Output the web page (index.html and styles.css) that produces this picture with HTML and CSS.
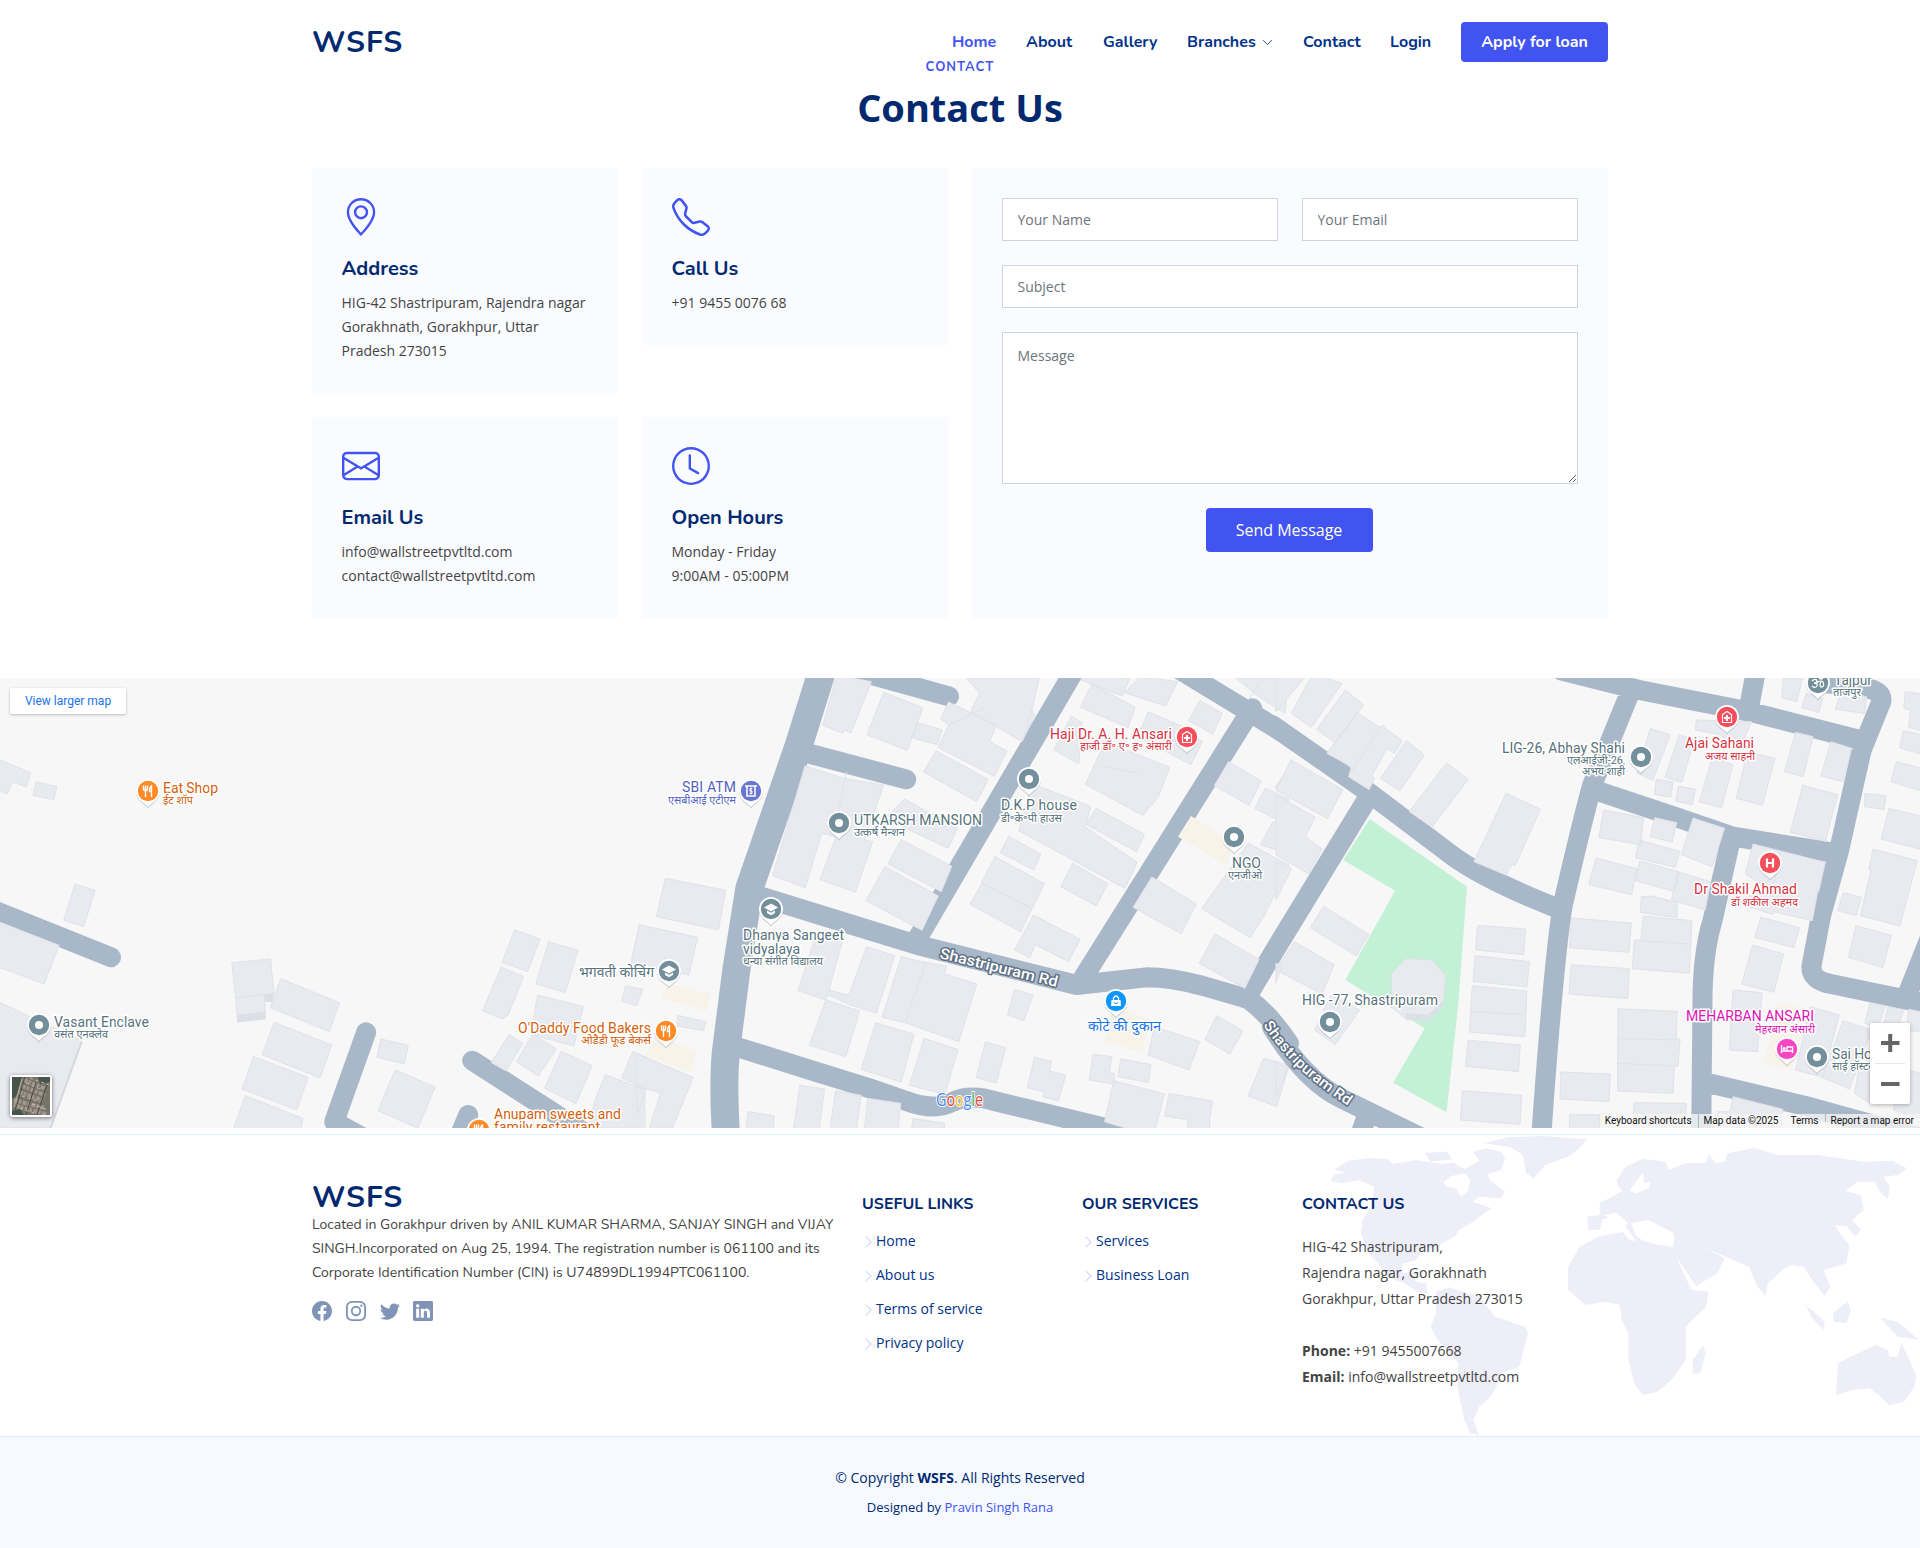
FILE: index.html
```html
<!DOCTYPE html>
<html lang="en">
<head>
<meta charset="utf-8">
<title>WSFS - Contact Us</title>
<link rel="stylesheet" href="styles.css">
</head>
<body>
<header class="header container">
  <a class="logo">WSFS</a>
  <nav class="nav">
    <a class="active">Home</a><a>About</a><a>Gallery</a>
    <a class="drop">Branches <svg width="11" height="11" viewBox="0 0 16 16"><path d="M1.6 4.6 8 11l6.400-6.400" fill="none" stroke="currentColor" stroke-width="1.300"/></svg></a>
    <a>Contact</a><a>Login</a><a class="cta">Apply for loan</a>
  </nav>
</header>
<main>
  <section class="contact container">
    <div class="title"><h2>Contact</h2><p>Contact Us</p></div>
    <div class="grid">
      <div class="card">
        <svg class="ic" viewBox="0 0 16 16"><path d="M12.166 8.940c-.524 1.062-1.234 2.120-1.960 3.070A32 32 0 0 1 8 14.580a32 32 0 0 1-2.206-2.570c-.726-.950-1.436-2.008-1.960-3.070C3.304 7.867 3 6.862 3 6a5 5 0 0 1 10 0c0 .862-.305 1.867-.834 2.940M8 16s6-5.686 6-10A6 6 0 0 0 2 6c0 4.314 6 10 6 10"/><path d="M8 8a2 2 0 1 1 0-4 2 2 0 0 1 0 4m0 1a3 3 0 1 0 0-6 3 3 0 0 0 0 6"/></svg>
        <h3>Address</h3><p>HIG-42 Shastripuram, Rajendra nagar<br>Gorakhnath, Gorakhpur, Uttar<br>Pradesh 273015</p>
      </div>
      <div class="card">
        <svg class="ic" viewBox="0 0 16 16"><path d="M3.654 1.328a.678.678 0 0 0-1.015-.063L1.605 2.300c-.483.484-.661 1.169-.450 1.770a17.600 17.600 0 0 0 4.168 6.608 17.600 17.600 0 0 0 6.608 4.168c.601.211 1.286.033 1.770-.450l1.034-1.034a.678.678 0 0 0-.063-1.015l-2.307-1.794a.680.680 0 0 0-.580-.122l-2.190.547a1.750 1.750 0 0 1-1.657-.459L5.482 8.062a1.750 1.750 0 0 1-.460-1.657l.548-2.190a.680.680 0 0 0-.122-.580zM1.884.511a1.745 1.745 0 0 1 2.612.163L6.290 2.980c.329.423.445.974.315 1.494l-.547 2.190a.680.680 0 0 0 .178.643l2.457 2.457a.680.680 0 0 0 .644.178l2.189-.547a1.750 1.750 0 0 1 1.494.315l2.306 1.794c.829.645.905 1.870.163 2.611l-1.034 1.034c-.740.740-1.846 1.065-2.877.702a18.600 18.600 0 0 1-7.010-4.420 18.600 18.600 0 0 1-4.420-7.009c-.362-1.030-.037-2.137.703-2.877z"/></svg>
        <h3>Call Us</h3><p>+91 9455 0076 68</p>
      </div>
      <div class="card">
        <svg class="ic" viewBox="0 0 16 16"><path d="M0 4a2 2 0 0 1 2-2h12a2 2 0 0 1 2 2v8a2 2 0 0 1-2 2H2a2 2 0 0 1-2-2zm2-1a1 1 0 0 0-1 1v.217l7 4.200 7-4.200V4a1 1 0 0 0-1-1zm13 2.383-4.708 2.825L15 11.105zm-.034 6.876-5.640-3.471L8 9.583l-1.326-.795-5.640 3.470A1 1 0 0 0 2 13h12a1 1 0 0 0 .966-.741M1 11.105l4.708-2.897L1 5.383z"/></svg>
        <h3>Email Us</h3><p>info@wallstreetpvtltd.com<br>contact@wallstreetpvtltd.com</p>
      </div>
      <div class="card">
        <svg class="ic" viewBox="0 0 16 16"><path d="M8 3.500a.5.5 0 0 0-1 0V9a.5.5 0 0 0 .252.434l3.500 2a.5.5 0 0 0 .496-.868L8 8.710z"/><path d="M8 16A8 8 0 1 0 8 0a8 8 0 0 0 0 16m7-8A7 7 0 1 1 1 8a7 7 0 0 1 14 0"/></svg>
        <h3>Open Hours</h3><p>Monday - Friday<br>9:00AM - 05:00PM</p>
      </div>
      <form class="form">
        <input placeholder="Your Name"><input placeholder="Your Email">
        <input class="wide" placeholder="Subject">
        <textarea class="wide" placeholder="Message"></textarea>
        <button class="wide" type="button">Send Message</button>
      </form>
    </div>
  </section>
  <section class="map">
    <svg class="tiles" width="1920" height="450" viewBox="0 0 1920 450">
      <defs>
        <g id="pin"><path d="M0 16.500C-3 12-12 9-12 0A12 12 0 0 1 12 0C12 9 3 12 0 16.500Z" fill="#8d99a3" opacity=".45" transform="translate(0 1)"/><path d="M0 16C-3 12-12 9-12 0A12 12 0 0 1 12 0C12 9 3 12 0 16Z" fill="#fff"/><circle r="10.200"/></g>
        <g id="dot"><use href="#pin" fill="#738f9b"/><circle r="4" fill="#fff"/></g>
        <g id="food"><use href="#pin" fill="#ff8a26"/><path d="M-4.500-5.500v3.500q0 1.500 2 1.500t2-1.500v-3.500M-2.500-5.500V6M3.500 6V-5Q1.500-4 1.500 0.500H3.500" fill="none" stroke="#fff" stroke-width="1.400"/></g>
        <g id="school"><use href="#pin" fill="#738f9b"/><path d="M-7-1.500 0-5.500 7-1.500 0 2.500ZM-4 1.500 0 3.800 4 1.500V4L0 6.300-4 4Z" fill="#fff"/></g>
        <g id="clinic"><use href="#pin" fill="#f74e5c"/><path d="M-4.500 5.500V-2.500L0-5.500 4.500-2.500V5.500Z" fill="none" stroke="#fff" stroke-width="1.200"/><path d="M0-2V4M-3 1H3" stroke="#fff" stroke-width="2"/></g>
      </defs>
      <g class="west" transform="translate(0 -8) scale(.40816 .33333)">
        <g class="road"><path d="M-60 699 272 862M897 1087 819 1355 900 1410M1157 1172 1460 1410M1147 1335 1115 1430"/></g>
        <g class="bld">
          <path d="M-10 265 76 309 64 351 30 336 18 372-10 360ZM88 336 139 349 132 389 81 376ZM184 643 233 661 205 770 156 750ZM-10 752 145 826 108 942-10 888ZM568 878 663 867 671 970 577 983ZM577 983 648 974 650 1046 582 1056ZM688 926 832 998 807 1085 662 1013ZM672 1057 813 1125 784 1224 642 1154ZM621 1160 755 1222 727 1320 593 1257ZM601 1277 742 1345 735 1400 565 1400ZM933 1107 1000 1126 991 1182 924 1162ZM968 1200 1066 1251 1024 1375 926 1322ZM1261 779 1323 808 1293 905 1230 877ZM1344 815 1416 841 1385 968 1313 941ZM1228 891 1283 920 1245 1035 1230 1047 1182 1022ZM1317 975 1429 1010 1406 1128 1301 1093ZM1247 1093 1281 1120 1240 1203 1204 1178ZM1305 1093 1363 1136 1319 1218 1265 1175ZM1375 1144 1451 1187 1411 1301 1334 1255ZM1483 1214 1580 1260 1580 1374 1445 1374 1455 1300ZM1550 1145 1590 1165 1570 1250 1523 1225ZM1533 948 1575 958 1560 1007 1523 993Z"/>
          <path d="M-10 992 200 1112 125 1374-10 1374Z"/>
        </g>
        <path d="M200 1115 122 1380" stroke="#d5d8de" stroke-width="5"/>
        <path d="M648 974 671 970 668 996 650 996ZM582 1034 650 1024V1048L582 1057Z" fill="#dcdfe6"/>
      </g>
      <g class="centre" transform="translate(640 -8) scale(.40816 .33333)">
        <g class="road">
          <path class="main" d="M452-20 388 230Q340 400 268 655L236 900 210 1150Q203 1250 211 1400"/>
          <path d="M520-1 757 79M390 243 652 328M1065 0 680 805M1500 115 1085 925M1310-10 1568 182M1780 390 1568 815 1485 985M230 1128 430 1205 560 1254 650 1292Q720 1325 765 1296 810 1270 870 1294L1180 1385"/>
          <path d="M285 676 500 757 680 825 1070 945 1240 922Q1300 922 1380 948L1490 987Q1540 1030 1590 1120"/>
        </g>
        <g class="bld">
          <path d="M482 15 567 35 517 188 500 180 496 190 448 166ZM597 67 693 113 655 241 556 194ZM680 158 740 180 728 224 668 204ZM756 96 872 165 857 215 899 243 868 319 730 232 757 165 736 146ZM800 24 978 24 960 120 968 135 936 215 810 125 832 70ZM725 242 853 328 825 395 695 306ZM404 288 500 325 597 345 550 510 570 515 528 666 441 629 480 500 445 490 405 653 325 617ZM648 387 778 475 755 535 600 445ZM640 509 764 589 738 665 607 581ZM600 590 731 678 691 781 554 692ZM960 340 1105 410 1090 470 1218 577 1188 655 928 482ZM1117 415 1236 493 1216 545 1093 463ZM903 499 982 552 965 600 883 548ZM870 560 991 641 962 714 836 640ZM838 640 960 716 932 785 808 703ZM964 735 1078 808 1050 875 968 824 955 863 918 840ZM1060 580 1146 641 1118 708 1031 650ZM1108 42 1213 112 1196 173 1079 112ZM1090 15 1200 25 1182 78 1080 30ZM1225 20 1317 35 1288 108 1187 68ZM1057 138 1083 158 1075 282 1014 240ZM1245 125 1330 170 1378 215 1350 284 1220 200ZM1372 92 1427 130 1403 192 1344 152ZM1140 215 1298 292 1270 380 1232 436 1091 343ZM1442 275 1522 333 1492 406 1407 347ZM1580 310 1590 370 1556 352ZM1532 355 1590 387 1570 455 1506 415ZM1550 455 1580 470 1575 545 1520 525ZM1490 520 1590 585 1530 735 1495 803 1376 716ZM1254 621 1363 702 1326 791 1208 712ZM1409 792 1517 868 1482 955 1370 880ZM1460 24 1590 24 1580 130 1510 75ZM62 625 210 661 192 779 40 740ZM-2 764 141 802 120 915-22 878ZM93 1036 161 1055 156 1082 90 1068ZM-10 1150 130 1222 80 1374 23 1374 50 1270-10 1245ZM-10 1250 15 1258-5 1330ZM430 800 496 812 463 960 512 976 555 830 624 858 579 1030 511 1003 462 975 455 990 387 962ZM640 860 694 876 752 888 746 912 825 942 781 1115 708 1084 650 1058 593 1042ZM455 990 538 1023 504 1160 415 1126ZM577 1058 671 1093 640 1236 542 1198ZM696 1105 779 1139 747 1272 660 1246ZM846 1116 896 1133 873 1239 824 1223ZM918 958 963 976 940 1052 900 1035ZM967 1162 1008 1175 1004 1203 1043 1216 1025 1293 986 1280 991 1266 949 1253ZM1110 1153 1156 1160 1150 1205 1163 1212 1161 1242 1101 1230ZM1178 1166 1252 1184 1246 1237 1171 1220ZM1260 1070 1371 1115 1345 1200 1245 1155ZM1413 1037 1477 1082 1445 1152 1384 1108ZM1528 1165 1590 1185 1560 1310 1490 1278ZM1161 1232 1285 1272 1258 1400 1138 1355ZM1296 1270 1403 1293 1396 1345 1395 1400 1340 1400 1342 1350 1286 1338ZM264 1325 329 1337 325 1400 258 1400ZM392 1246 452 1257 437 1400 373 1400ZM479 1262 542 1276 528 1400 463 1400ZM558 1285 639 1300 630 1400 548 1400ZM668 1345 747 1360 744 1400 664 1400Z"/>
          <path class="seam" d="M478 480 506 305M700 880 650 1055M757 165 840 115M1140 290 1218 310M1520 35 1490 90M960 120 936 215"/>
        </g>
        <path class="shop" d="M1350 438 1450 515 1440 588 1318 500ZM68 940 174 972 162 1023 52 985ZM40 1100 141 1145 125 1206 12 1155ZM1160 1010 1248 1050 1230 1147 1138 1115Z"/>
      </g>
      <g class="east" transform="translate(1280 -8) scale(.40816 .33333)">
        <path class="park" d="M220 447 458 650 437 1000 408 1327 277 1238 355 1075 160 930 282 662 155 570Z"/>
        <g class="road">
          <path d="M-20 165 215 365 420 555Q500 628 680 715M855 75 765 345Q735 480 692 710 670 880 640 1400M690 2 880 60 1150 125 1430 213M1340 40 1430 52Q1478 62 1473 95L1425 240 1370 540 1325 740 1302 890Q1300 930 1350 942L1590 1003M1168-10 1148 120M770 360 960 437 1110 500 1355 548M1105 505Q1080 640 1060 750 1035 850 1035 1000L1032 1400M1035 1235 1300 1312 1560 1400M1600 780 1535 980M-20 1070Q60 1230 150 1285L350 1405M215 1330 195 1400"/>
        </g>
        <g class="bld">
          <path d="M-10 15 60 24-10 125ZM80 10 152 40 77 172 28 130ZM160 60 205 105 135 218 90 178ZM190 128 245 172 250 167 300 212 280 250 262 235 225 318 232 325 218 359 168 320 175 290 115 250ZM310 212 354 255 294 362 246 325ZM408 278 461 328 372 472 317 425ZM554 370 638 418 576 588 570 583 553 615 475 575ZM27 270 154 359 116 446-10 360ZM-10 375 86 441 62 500 103 537 70 611-10 555ZM-10 575 28 596-10 690ZM107 709 218 794 187 857 74 773ZM35 815 133 884 103 972-10 900ZM-10 880 5 885-10 940ZM125 975 195 1020 135 1124 85 1080ZM-10 1180 20 1195-10 1280ZM308 866 372 870 406 917 400 1000 363 1052 308 1047 273 1010 273 912ZM484 766 602 777 597 854 479 840ZM478 857 611 875 605 951 473 934ZM471 947 605 963 600 1100 464 1086ZM461 1111 589 1125 584 1205 454 1189ZM447 1262 592 1276 588 1363 442 1350ZM793 420 891 443 883 524 781 503ZM918 443 972 458 961 516 907 500ZM880 510 979 544 969 592 871 563ZM774 564 874 596 862 674 757 644ZM882 573 978 606 966 664 870 632ZM1012 444 1089 475 1059 591 983 553ZM975 606 1055 635 1042 720 959 690ZM885 680 912 678 973 698 973 743 883 727ZM714 744 861 759 855 847 709 833ZM890 738 1009 752 1003 910 863 896 868 811 884 810ZM713 884 856 896 852 986 708 972ZM828 1016 973 1024 971 1104 980 1110 975 1188 966 1190 963 1270 827 1263ZM688 1206 809 1212 806 1295 686 1287ZM710 1334 783 1334 783 1400 708 1400ZM867 1298 996 1300 990 1380 866 1380ZM907 175 956 195 913 330 875 310ZM978 195 1015 208 985 337 943 322ZM1020 150 1155 155 1130 225 1100 220 1080 195 1018 180ZM922 328 963 336 957 382 917 373ZM976 349 1017 357 1011 404 970 394ZM1060 260 1110 285 1082 413 1027 395ZM1145 245 1213 265 1182 406 1118 385ZM1263 187 1306 200 1282 320 1236 305ZM1350 215 1400 235 1380 335 1325 318ZM1281 346 1366 374 1336 514 1250 487ZM1234 24 1280 24 1267 95 1229 83ZM1290 70 1330 85 1320 128 1278 112ZM1375 65 1437 80 1432 130 1360 118ZM1532 65 1590 75 1590 190 1540 172 1545 120 1528 115ZM1527 182 1590 200 1590 260 1518 233ZM1510 275 1590 300 1590 370 1497 335ZM1433 370 1485 377 1480 418 1432 410ZM1492 415 1590 445 1590 545 1473 507ZM1453 537 1561 572 1519 768 1422 737 1448 600 1443 598ZM1380 668 1425 682 1411 737 1366 722ZM1411 767 1498 796 1477 893 1393 862ZM1159 522 1336 577 1320 665 1318 662 1304 752 1210 725 1208 733 1120 700 1190 650 1140 612ZM1178 741 1273 773 1259 833 1163 802ZM1158 825 1234 852 1210 967 1131 942ZM1110 960 1181 968 1170 1145 1101 1140ZM1300 1010 1370 1035 1330 1222 1263 1200ZM1380 1052 1450 1080 1395 1257 1328 1222ZM1445 1000 1482 1010 1465 1072 1433 1060ZM1490 1010 1528 1020 1515 1070 1480 1060ZM1540 1018 1590 1030 1590 1090 1535 1080ZM1420 1180 1445 1190 1445 1300 1408 1270ZM1535 1200 1590 1215 1590 1350 1502 1320ZM1110 1280 1232 1318 1225 1400 1070 1400 1073 1325 1103 1325Z"/>
          <path class="seam" d="M467 1025 602 1033M827 1105 972 1110M827 1180 966 1188M868 811 1003 822M1225 548 1210 640M1225 640 1210 725M190 128 115 250M245 172 168 320"/>
        </g>
        <path d="M308 1030 363 1034 400 990 400 1010 363 1054 308 1048Z" fill="#dcdfe6"/>
        <path class="shop" d="M1220 1000 1270 1012 1262 1060 1280 1100 1250 1198 1184 1178 1205 1080Z"/>
      </g>

      <g>
        <use href="#food" x="148" y="113"/><use href="#food" x="666" y="353"/><use href="#food" x="479" y="452"/>
        <use href="#dot" x="39" y="347"/><use href="#dot" x="839" y="145"/><use href="#dot" x="1029" y="101"/><use href="#dot" x="1234" y="159"/><use href="#dot" x="1641" y="79"/><use href="#dot" x="1817" y="379"/><use href="#dot" x="1330" y="344"/>
        <use href="#school" x="669" y="293"/><use href="#school" x="771" y="231"/>
        <use href="#clinic" x="1187" y="59"/><use href="#clinic" x="1727" y="39"/>
        <g transform="translate(751 113)"><use href="#pin" fill="#6877d3"/><path d="M-6-5H6M-4-5V5H4V-5" fill="none" stroke="#fff" stroke-width="1.500"/><path d="M1.500-2.500H-1V0H1V2.500H-1.500M0-3.500V3.500" fill="none" stroke="#fff"/></g>
        <g transform="translate(1116 323)"><use href="#pin" fill="#0f96fb"/><path d="M-4.500-1H4.500L5 5H-5Z" fill="#fff"/><path d="M-2.500-1V-3Q0-7 2.500-3V-1" fill="none" stroke="#fff" stroke-width="1.300"/><path d="M-2 1.500Q0 4 2 1.500" fill="none" stroke="#0f96fb"/></g>
        <g transform="translate(1818 5)"><use href="#pin" fill="#738f9b"/><path d="M-6-2Q-3-5-1-2.500-1 0-4 0 0 0-1 3-3 6-6 3M-2 0Q3-3 5-1 7 4 3 4 1 2 3-1M1-5Q3-3 5-5" fill="none" stroke="#fff" stroke-width="1.300"/></g>
        <g transform="translate(1770 185)"><use href="#pin" fill="#f74e5c"/><path d="M-3-4.500V4.500M3-4.500V4.500M-3 0H3" stroke="#fff" stroke-width="2.200"/></g>
        <g transform="translate(1787 371)"><use href="#pin" fill="#f746c3"/><path d="M-5.500-4V4M5.500 4V-2H0V2M-5.500 2H5.500" fill="none" stroke="#fff" stroke-width="1.400"/><circle cx="-2.800" cy="-.5" r="1.500" fill="#fff"/></g>
      </g>

      <g class="lbl">
        <g fill="#d5600b">
          <text x="163" y="115" textLength="55">Eat Shop</text><text class="hi" x="163" y="126" textLength="30" lengthAdjust="spacingAndGlyphs">ईट शॉप</text>
          <text x="518" y="355" textLength="133">O'Daddy Food Bakers</text><text class="hi" x="581" y="366" textLength="70" lengthAdjust="spacingAndGlyphs">ओडैडी फूड बेकर्स</text>
          <text x="494" y="441" textLength="127">Anupam sweets and</text><text x="494" y="454" textLength="106">family restaurant</text>
        </g>
        <g fill="#56727c">
          <text x="54" y="349" textLength="95">Vasant Enclave</text><text class="hi" x="54" y="360" textLength="54" lengthAdjust="spacingAndGlyphs">वसंत एनक्लेव</text>
          <text x="579" y="299" textLength="75" lengthAdjust="spacingAndGlyphs">भगवती कोचिंग</text>
          <text x="854" y="147" textLength="128">UTKARSH MANSION</text><text class="hi" x="854" y="158" textLength="51" lengthAdjust="spacingAndGlyphs">उत्कर्ष मैन्शन</text>
          <text x="1001" y="132" textLength="76">D.K.P house</text><text class="hi" x="1001" y="144" textLength="61" lengthAdjust="spacingAndGlyphs">डी॰के॰पी हाउस</text>
          <text x="1232" y="190" textLength="29">NGO</text><text class="hi" x="1228" y="201" textLength="34" lengthAdjust="spacingAndGlyphs">एनजीओ</text>
          <text x="743" y="262" textLength="101">Dhanya Sangeet</text><text x="743" y="276" textLength="57">vidyalaya</text><text class="hi" x="743" y="287" textLength="80" lengthAdjust="spacingAndGlyphs">धन्या संगीत विद्यालय</text>
          <text x="1502" y="75" textLength="123">LIG-26, Abhay Shahi</text><text class="hi" x="1567" y="86" textLength="58" lengthAdjust="spacingAndGlyphs">एलआईजी-26,</text><text class="hi" x="1582" y="97" textLength="43" lengthAdjust="spacingAndGlyphs">अभय शाही</text>
          <text x="1834" y="7" textLength="38">Tajpur</text><text class="hi" x="1833" y="18" textLength="28" lengthAdjust="spacingAndGlyphs">ताजपुर</text>
          <text x="1302" y="327" textLength="136">HIG -77, Shastripuram</text>
          <text x="1832" y="381" textLength="62">Sai Hostel</text><text class="hi" x="1832" y="392" textLength="44" lengthAdjust="spacingAndGlyphs">साई हॉस्टल</text>
        </g>
        <g fill="#5162c4"><text x="682" y="114" textLength="54">SBI ATM</text><text class="hi" x="668" y="126" textLength="68" lengthAdjust="spacingAndGlyphs">एसबीआई एटीएम</text></g>
        <g fill="#d93040">
          <text x="1050" y="61" textLength="122">Haji Dr. A. H. Ansari</text><text class="hi" x="1080" y="72" textLength="92" lengthAdjust="spacingAndGlyphs">हाजी डॉ॰ ए॰ ह॰ अंसारी</text>
          <text x="1685" y="70" textLength="69">Ajai Sahani</text><text class="hi" x="1705" y="82" textLength="50" lengthAdjust="spacingAndGlyphs">अजय साहनी</text>
          <text x="1694" y="216" textLength="103">Dr Shakil Ahmad</text><text class="hi" x="1731" y="228" textLength="67" lengthAdjust="spacingAndGlyphs">डॉ शकील अहमद</text>
        </g>
        <g fill="#e012b4"><text x="1686" y="343" textLength="128">MEHARBAN ANSARI</text><text class="hi" x="1755" y="355" textLength="60" lengthAdjust="spacingAndGlyphs">मेहरबान अंसारी</text></g>
        <text fill="#1a73e8" x="1088" y="353" textLength="73" lengthAdjust="spacingAndGlyphs">कोटे की दुकान</text>
      </g>
      <g class="street">
        <text transform="translate(939 280) rotate(13.800)" textLength="121" lengthAdjust="spacingAndGlyphs">Shastripuram Rd</text>
        <path id="bend" d="M1263 347Q1285 380 1310 400T1362 437" fill="none"/>
        <text><textPath href="#bend" textLength="118" lengthAdjust="spacingAndGlyphs">Shastripuram Rd</textPath></text>
      </g>
      <text class="glogo" x="936" y="428" textLength="47" lengthAdjust="spacingAndGlyphs"><tspan fill="#4285f4">G</tspan><tspan fill="#ea4335">o</tspan><tspan fill="#fbbc04">o</tspan><tspan fill="#4285f4">g</tspan><tspan fill="#34a853">l</tspan><tspan fill="#ea4335">e</tspan></text>
    </svg>
    <a class="larger">View larger map</a>
    <div class="thumb"><svg width="38" height="38" viewBox="0 0 38 38"><path fill="#77756a" d="M0 0h38v38H0z"/><path fill="#46544c" d="M0 0h10L6 18 0 22zM26 0h12v5L28 7zM0 34l8-2 4 6H0z"/><path d="M12 3 34 12M10 9 33 18M7 15 30 23M2 23 32 31M4 29 34 37" stroke="#a3968a" stroke-width="4" stroke-dasharray="4 1 2.500 1.500"/><path d="M13 0 3 34M24 5 14 38M35 8 25 38" stroke="#4b4d45" stroke-width="1"/><path d="M14 6 30 13M10 19 28 25M8 31 24 37M18 1 37 8M20 27 36 33" stroke="#c9bdb0" stroke-dasharray="3 3"/><path d="M10 2 2 30" stroke="#b3a899" stroke-width="1.200"/></svg></div>
    <div class="zoom"><svg width="40" height="81" viewBox="0 0 40 81"><path d="M11 20H29.500M20.200 11V29M11 61H29.500" stroke="#666" stroke-width="4"/><path d="M5 40.500H35" stroke="#e6e6e6"/></svg></div>
    <div class="attr"><span>Keyboard shortcuts</span><span>Map data ©2025</span><span>Terms</span><span>Report a map error</span></div>
  </section>
</main>
<footer class="footer">
  <div class="top">
    <svg class="world" viewBox="0 45 1568 903" preserveAspectRatio="none"><path d="M541 182 547 165 566 158 548 148 572 122 610 114 641 118 650 132 690 120 735 132 755 128 775 148 800 122 790 95 812 85 838 95 845 115 838 150 815 163 820 182 845 215 838 235 800 230 788 245 822 265 800 290 790 305 765 330 757 350 733 372 728 390 705 380 690 420 665 432 668 460 690 455 688 485 708 490 710 520 695 518 670 490 640 470 612 400 622 430 608 400 594 340 597 300 614 255 617 200 590 180 560 190ZM808 70 850 52 910 48 988 58 975 85 955 110 915 135 895 175 882 160 876 105 855 82ZM705 98 745 95 752 118 715 125ZM725 515 748 502 800 530 828 590 880 620 885 640 870 740 838 760 830 800 820 830 800 860 790 900 800 946 785 940 774 900 762 800 764 730 728 660 715 620 725 580ZM1040 180 1055 140 1085 116 1125 125 1130 150 1160 130 1195 128 1200 103 1212 130 1228 125 1232 100 1280 83 1320 105 1390 105 1470 125 1520 122 1545 145 1530 165 1505 170 1515 200 1512 238 1498 215 1490 185 1460 185 1437 212 1465 225 1470 270 1450 300 1465 330 1455 350 1442 320 1420 315 1428 340 1445 375 1440 430 1400 450 1412 500 1402 528 1380 480 1365 440 1345 435 1328 450 1303 490 1299 528 1285 500 1270 440 1235 415 1190 380 1228 415 1215 460 1178 498 1155 440 1135 388 1140 370 1075 370 1060 330 1035 285 1015 300 1010 330 990 330 988 290 1010 285 1010 250 1050 212 1040 195ZM1008 350 1050 335 1062 360 1135 380 1170 510 1200 515 1195 560 1160 620 1160 720 1135 780 1110 815 1085 826 1070 790 1060 720 1060 640 1048 600 1045 555 1020 545 985 555 955 510 955 440 975 380ZM1190 677 1195 700 1185 760 1172 760 1172 720ZM1368 553 1402 605 1400 630 1380 595ZM1416 580 1442 545 1448 570 1440 610 1418 605ZM1498 593 1530 605 1566 660 1530 650ZM1425 730 1460 700 1490 675 1512 690 1515 710 1530 710 1535 668 1550 720 1562 770 1558 800 1540 845 1515 856 1500 830 1480 805 1450 810 1422 826Z"/><path fill="#fff" d="M738 185 752 168 775 160 785 180 780 215 768 230 760 205 742 200ZM1075 180 1085 160 1088 190 1100 185 1095 205 1075 220 1062 212ZM1065 310 1095 300 1138 338 1140 368 1115 375 1085 362 1072 345ZM1018 285 1040 278 1060 310 1050 328Z"/></svg>
    <div class="cols container">
      <div class="about"><a class="logo">WSFS</a>
        <p>Located in Gorakhpur driven by ANIL KUMAR SHARMA, SANJAY SINGH and VIJAY<br>SINGH.Incorporated on Aug 25, 1994. The registration number is 061100 and its<br>Corporate Identification Number (CIN) is U74899DL1994PTC061100.</p>
        <div class="social">
          <svg viewBox="0 0 16 16"><path d="M16 8.049c0-4.446-3.582-8.050-8-8.050C3.580 0-.002 3.603-.002 8.050c0 4.017 2.926 7.347 6.750 7.951v-5.625h-2.030V8.050H6.750V6.275c0-2.017 1.195-3.131 3.022-3.131.876 0 1.791.157 1.791.157v1.980h-1.009c-.993 0-1.303.621-1.303 1.258v1.510h2.218l-.354 2.326H9.250V16c3.824-.604 6.750-3.934 6.750-7.951"/></svg>
          <svg viewBox="0 0 16 16"><path fill-rule="evenodd" d="M4.700 0h6.600A4.700 4.700 0 0 1 16 4.700v6.600A4.700 4.700 0 0 1 11.300 16H4.700A4.700 4.700 0 0 1 0 11.300V4.700A4.700 4.700 0 0 1 4.700 0M4.800 1.450A3.350 3.350 0 0 0 1.450 4.800v6.400a3.350 3.350 0 0 0 3.350 3.350h6.400a3.350 3.350 0 0 0 3.350-3.350V4.800a3.350 3.350 0 0 0-3.350-3.350zM8 3.892a4.108 4.108 0 1 1 0 8.216 4.108 4.108 0 0 1 0-8.216m0 1.441a2.667 2.667 0 1 0 0 5.334 2.667 2.667 0 0 0 0-5.334"/><circle cx="12.270" cy="3.730" r=".96"/></svg>
          <svg viewBox="0 0 16 16"><path d="M5.026 15c6.038 0 9.341-5.003 9.341-9.334q.002-.211-.006-.422A6.700 6.700 0 0 0 16 3.542a6.700 6.700 0 0 1-1.889.518 3.300 3.300 0 0 0 1.447-1.817 6.500 6.500 0 0 1-2.087.793A3.286 3.286 0 0 0 7.875 6.030a9.320 9.320 0 0 1-6.767-3.429 3.290 3.290 0 0 0 1.018 4.382A3.300 3.300 0 0 1 .640 6.575v.045a3.290 3.290 0 0 0 2.632 3.218 3.200 3.200 0 0 1-.865.115 3 3 0 0 1-.614-.057 3.280 3.280 0 0 0 3.067 2.277A6.600 6.600 0 0 1 .780 13.580a6 6 0 0 1-.780-.045A9.340 9.340 0 0 0 5.026 15"/></svg>
          <svg viewBox="0 0 16 16"><path d="M0 1.146C0 .513.526 0 1.175 0h13.650C15.474 0 16 .513 16 1.146v13.708c0 .633-.526 1.146-1.175 1.146H1.175C.526 16 0 15.487 0 14.854zm4.943 12.248V6.169H2.542v7.225zm-1.200-8.212c.837 0 1.358-.554 1.358-1.248-.015-.709-.520-1.248-1.342-1.248S2.400 3.226 2.400 3.934c0 .694.521 1.248 1.327 1.248zm4.908 8.212V9.359c0-.216.016-.432.080-.586.173-.431.568-.878 1.232-.878.869 0 1.216.662 1.216 1.634v3.865h2.401V9.250c0-2.220-1.184-3.252-2.764-3.252-1.274 0-1.845.700-2.165 1.193v.025h-.016l.016-.025V6.169h-2.400c.030.678 0 7.225 0 7.225z"/></svg>
        </div>
      </div>
      <div class="links"><h4>Useful Links</h4><a>Home</a><a>About us</a><a>Terms of service</a><a>Privacy policy</a></div>
      <div class="links"><h4>Our Services</h4><a>Services</a><a>Business Loan</a></div>
      <div class="reach"><h4>Contact Us</h4><p>HIG-42 Shastripuram,<br>Rajendra nagar, Gorakhnath<br>Gorakhpur, Uttar Pradesh 273015<br><br><b>Phone:</b> +91 9455007668<br><b>Email:</b> info@wallstreetpvtltd.com</p></div>
    </div>
  </div>
  <div class="bottom"><p>© Copyright <b>WSFS</b>. All Rights Reserved</p><p class="by">Designed by <a>Pravin Singh Rana</a></p></div>
</footer>
</body>
</html>
```
FILE: styles.css
```css
* { box-sizing: border-box; }
body { margin: 0; background: #fff; color: #444; font-family: "Open Sans", sans-serif; font-size: 16px; line-height: 1.5; }
h2, h3, h4, p { margin: 0; }
.container { width: 1296px; margin: 0 auto; }

.header { display: flex; justify-content: space-between; align-items: center; height: 84px; }
.logo { font: 700 30px/36px Nunito, Lato, sans-serif; letter-spacing: 1px; color: #012970; }
.header .logo { padding-top: 2px; }
.nav { display: grid; grid-template-columns: 44px 47px 54px 86px 58px 41px 147px; column-gap: 30px; align-items: center; font: 700 16px/24px Nunito, Lato, sans-serif; color: #013289; white-space: nowrap; }
.nav a:nth-child(-n+5) { margin: 0 -1px 0 1px; }
.nav .active { color: #4154f1; }
.drop { display: flex; align-items: center; justify-content: space-between; }
.cta { height: 40px; line-height: 40px; text-align: center; background: #4154f1; color: #fff; border-radius: 4px; }

/* the title sits partly under the header bar */
.contact { height: 622px; margin-top: -28px; }
.title { height: 112px; padding-top: 1px; text-align: center; }
.title h2 { font: 700 13px/20px Nunito, Lato, sans-serif; letter-spacing: 1px; color: #4154f1; text-transform: uppercase; }
.title p { font-size: 38px; line-height: 42px; font-weight: 700; color: #012970; margin-top: 9px; }
.grid { display: grid; grid-template-columns: 306px 306px 636px; grid-template-rows: 225px 201px; gap: 24px; align-items: start; }
.card { background: #fafbff; padding: 30px 30px 30px 29.500px; }
.card:nth-child(1), .card:nth-child(3), .card:nth-child(4) { height: 100%; }
.ic { display: block; width: 38px; height: 38px; fill: #4154f1; }
.card h3 { font: 700 20px/24px Nunito, Lato, sans-serif; color: #012970; margin: 21px 0 10px; }
.card p { font-size: 14px; line-height: 24px; white-space: nowrap; }
.form { grid-column: 3; grid-row: 1 / 3; height: 450px; background: #fafbff; padding: 30px; display: grid; grid-template-columns: 1fr 1fr; grid-template-rows: 43px 43px 152px 44px; gap: 24px; }
.form .wide { grid-column: 1 / 3; }
input, textarea { min-width: 0; width: 100%; border: 1px solid #ced4da; border-radius: 0; padding: 10px 14.500px; background: #fff; font: 14px/21px "Open Sans", sans-serif; }
textarea { padding: 12px 14.500px; display: block; height: 152px; }
::placeholder { color: #6c757d; opacity: 1; }
button { justify-self: center; width: 167px; margin-right: 2px; border: 0; border-radius: 4px; background: #4154f1; color: #fff; font: 16px/24px "Open Sans", sans-serif; }

.map { position: relative; height: 450px; overflow: hidden; background: #f7f7f7; font-family: Roboto, sans-serif; }
.tiles { display: block; }
.road path { fill: none; stroke: #a9b8c9; stroke-width: 20; stroke-linecap: round; stroke-linejoin: round; vector-effect: non-scaling-stroke; }
.road .main { stroke-width: 28; }
.bld path { fill: #e8eaef; stroke: #dfe2e9; stroke-width: 1; vector-effect: non-scaling-stroke; }
.bld .seam { fill: none; }
.park { fill: #c3f1d5; }
.shop { fill: #f8f3e9; }
.lbl { font: 14px Roboto, "Noto Sans", sans-serif; paint-order: stroke; stroke: #fff; stroke-width: 3px; stroke-linejoin: round; }
.lbl .hi { font-size: 11px; }
.street { font: 500 15px Roboto, sans-serif; fill: #fff; paint-order: stroke; stroke: #5f7185; stroke-width: 3px; stroke-linejoin: round; }
.street path { stroke: none; }
.glogo { font: 500 18px "Open Sans", sans-serif; paint-order: stroke; stroke: #fff; stroke-width: 2px; }
.larger { position: absolute; left: 10px; top: 10px; width: 116px; height: 26px; border-radius: 2px; background: #fff; box-shadow: 0 1px 3px rgba(0,0,0,.25); color: #1a73e8; font-size: 12px; line-height: 26px; text-align: center; }
.thumb { position: absolute; left: 10px; top: 397px; width: 42px; height: 42px; border: 2px solid #fff; border-radius: 3px; box-shadow: 0 1px 4px rgba(0,0,0,.5); }
.thumb svg { display: block; }
.zoom { position: absolute; left: 1870px; top: 345px; width: 40px; height: 81px; background: #fff; border-radius: 2px; box-shadow: 0 1px 4px rgba(0,0,0,.3); }
.attr { position: absolute; right: 0; bottom: 0; display: flex; height: 14px; font-size: 10px; line-height: 14px; color: #111; gap: 1px; white-space: nowrap; }
.attr span { background: rgba(245,245,245,.8); padding: 0 6px 0 5px; }

.footer { margin-top: 6px; }
.top { position: relative; height: 302px; border-top: 1px solid #e1ecff; }
.world { position: absolute; right: 0; top: 0; width: 900px; height: 301px; fill: #eeeef8; }
.cols { position: relative; display: grid; grid-template-columns: 550px 220px 220px 306px; }
.about { padding-top: 45px; }
.about .logo { display: block; }
.about p { font: 14px/24px Nunito, Lato, sans-serif; white-space: nowrap; margin-top: -3px; }
.social { display: flex; gap: 13.800px; margin-top: 16px; }
.social svg { width: 20px; height: 20px; fill: #8094b7; }
.footer h4 { font: 700 16px/20px Nunito, Lato, sans-serif; text-transform: uppercase; color: #012970; padding-top: 59px; }
.links a { display: flex; align-items: center; font-size: 14px; line-height: 34px; color: #013289; }
.links h4 { margin-bottom: 10px; }
.links a::before { content: ""; width: 7px; height: 7px; border: solid #d0d4fc; border-width: 1px 1px 0 0; transform: rotate(45deg); margin: 1px 6px 0 0; }
.reach p { font-size: 14px; line-height: 26px; margin-top: 20px; }
.bottom { height: 112px; border-top: 1px solid #e1ecff; background: #f6f9ff; text-align: center; color: #012970; font-size: 14px; padding-top: 30px; }
.bottom p { line-height: 21px; }
.bottom .by { font-size: 13px; line-height: 20px; margin-top: 9px; }
.by a { color: #4154f1; }
```
